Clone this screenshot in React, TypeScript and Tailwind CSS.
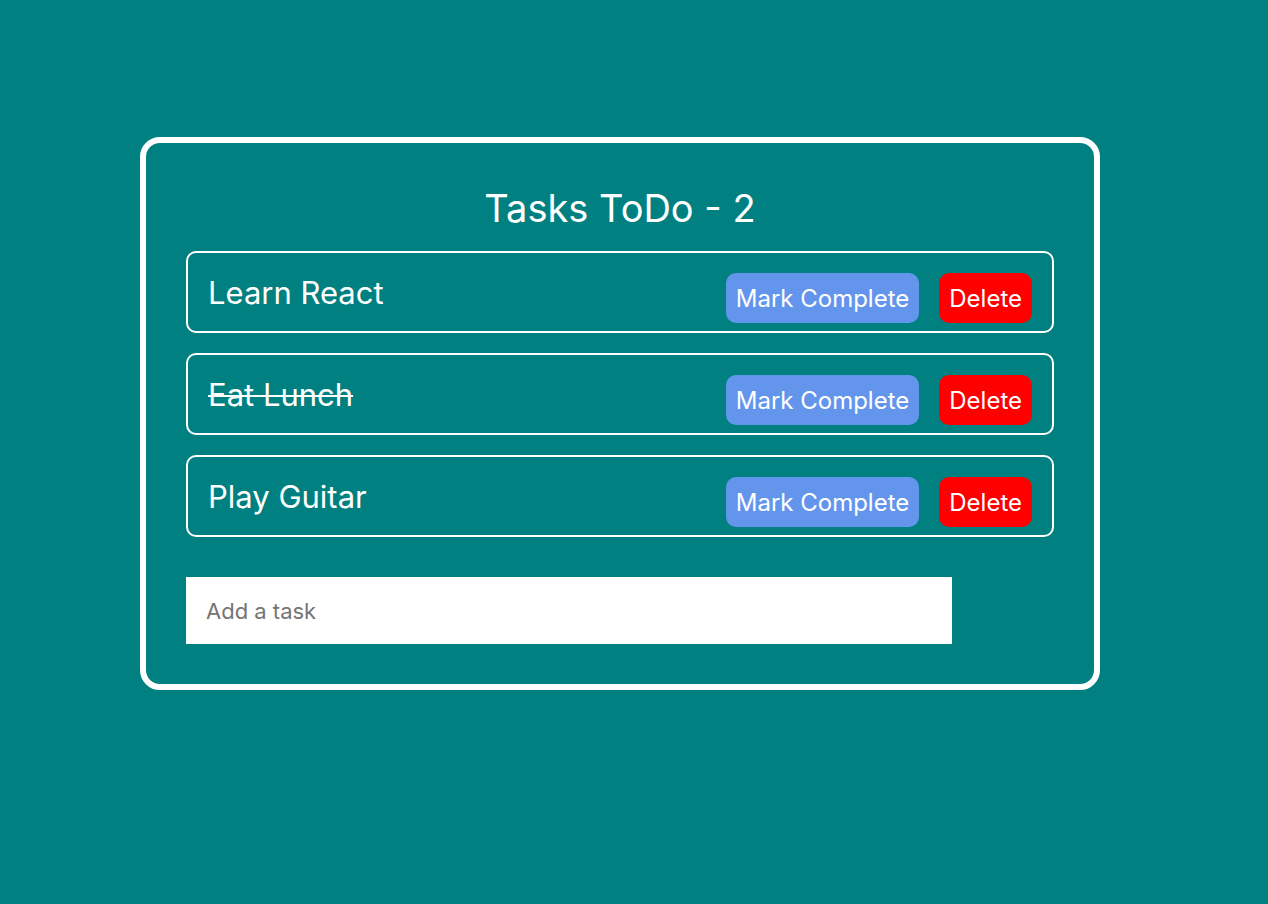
import { useState } from "react";

type Task = { title: string; completed: boolean };

const initialTasks: Task[] = [
  { title: "Learn React", completed: false },
  { title: "Eat Lunch", completed: true },
  { title: "Play Guitar", completed: false },
];

export default function App() {
  const [tasks, setTasks] = useState(initialTasks);
  const [draft, setDraft] = useState("");

  const complete = (index: number) =>
    setTasks(tasks.map((task, i) => (i === index ? { ...task, completed: true } : task)));
  const remove = (index: number) => setTasks(tasks.filter((_, i) => i !== index));

  return (
    <div className="min-h-screen bg-[#008080] pt-[137px] pr-12 pb-10 pl-5 font-['Inter',sans-serif] text-white">
      <main className="mx-auto w-full max-w-[960px] rounded-[20px] border-6 border-white p-10">
        <h1 className="mb-[18px] text-center text-[38px] leading-[50px]">
          Tasks ToDo - {tasks.filter((task) => !task.completed).length}
        </h1>
        <ul className="flex flex-col gap-5">
          {tasks.map((task, index) => (
            <li
              key={task.title}
              className="flex items-start justify-between rounded-[10px] border-2 border-white px-5 pt-5 pb-2"
            >
              <span
                className={
                  task.completed
                    ? "text-[31px] leading-10 line-through decoration-2"
                    : "text-[31px] leading-10"
                }
              >
                {task.title}
              </span>
              <div className="flex gap-5">
                <button
                  type="button"
                  onClick={() => complete(index)}
                  className="h-[50px] rounded-[10px] bg-[#6495ed] px-[10px] pt-0.5 text-2xl"
                >
                  Mark Complete
                </button>
                <button
                  type="button"
                  onClick={() => remove(index)}
                  className="h-[50px] rounded-[10px] bg-[#ff0000] px-[10px] pt-0.5 text-2xl"
                >
                  Delete
                </button>
              </div>
            </li>
          ))}
        </ul>
        <form
          className="mt-10"
          onSubmit={(event) => {
            event.preventDefault();
            if (!draft.trim()) return;
            setTasks([...tasks, { title: draft, completed: false }]);
            setDraft("");
          }}
        >
          <input
            type="text"
            aria-label="Add a task"
            placeholder="Add a task"
            value={draft}
            onChange={(event) => setDraft(event.target.value)}
            className="block h-[67px] w-[766px] max-w-full bg-white px-5 text-[22px] text-black placeholder:text-[#757575]"
          />
        </form>
      </main>
    </div>
  );
}
